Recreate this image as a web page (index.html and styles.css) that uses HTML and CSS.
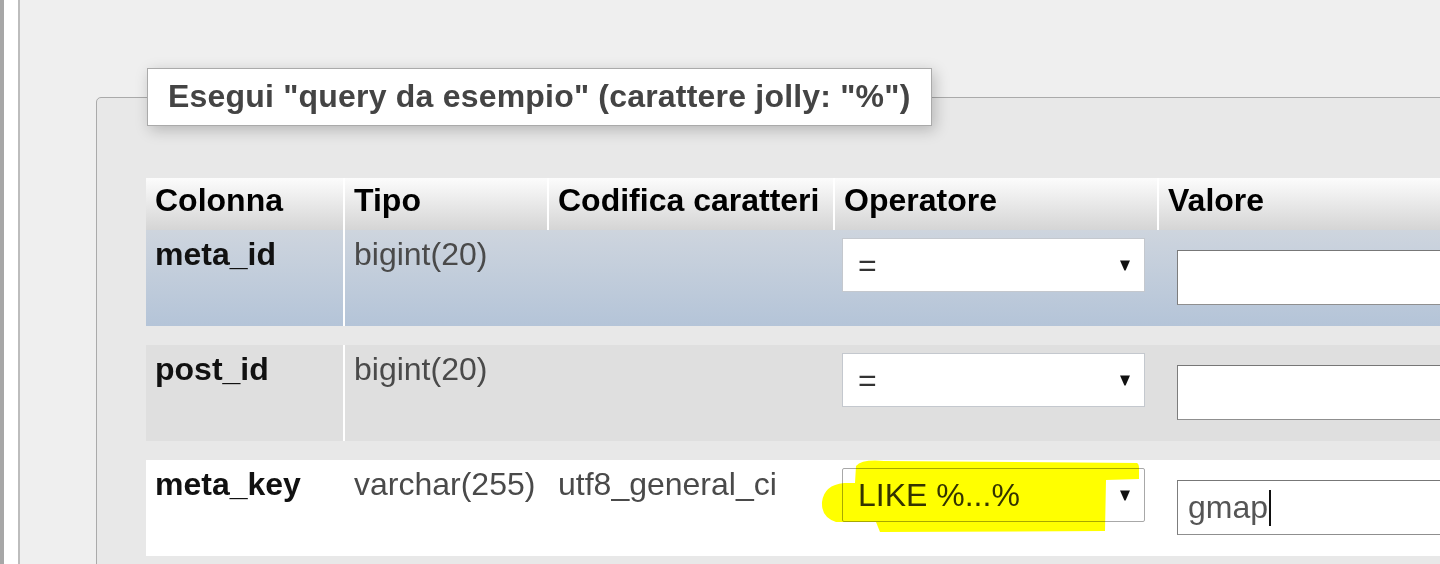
FILE: index.html
```html
<!DOCTYPE html>
<html lang="it">
<head>
    <meta charset="UTF-8">
    <meta name="viewport" content="width=device-width, initial-scale=1.0">
    <title>Cerca - post_meta</title>
    <link rel="stylesheet" href="styles.css">
</head>
<body>
    <div class="frame">
        <div class="frame-edge"></div>
        <div class="frame-gap"></div>

        <!-- Search form -->
        <main class="content">
            <fieldset class="search">
                <legend>Esegui "query da esempio" (carattere jolly: "%")</legend>
                <table class="data">
                    <colgroup>
                        <col class="col-name">
                        <col class="col-type">
                        <col class="col-collation">
                        <col class="col-operator">
                        <col class="col-value">
                    </colgroup>
                    <thead>
                        <tr>
                            <th>Colonna</th>
                            <th>Tipo</th>
                            <th>Codifica caratteri</th>
                            <th>Operatore</th>
                            <th>Valore</th>
                        </tr>
                    </thead>
                    <tbody>
                        <tr class="marked">
                            <th>meta_id</th>
                            <td>bigint(20)</td>
                            <td></td>
                            <td>
                                <div class="select">
                                    <span>=</span>
                                    <svg class="arrow" width="10" height="11" viewBox="0 0 10 11"><path d="M0 0.5 H10 L5.6 10.5 H4.4 Z"/></svg>
                                </div>
                            </td>
                            <td><div class="value-input"></div></td>
                        </tr>
                        <tr class="even">
                            <th>post_id</th>
                            <td>bigint(20)</td>
                            <td></td>
                            <td>
                                <div class="select">
                                    <span>=</span>
                                    <svg class="arrow" width="10" height="11" viewBox="0 0 10 11"><path d="M0 0.5 H10 L5.6 10.5 H4.4 Z"/></svg>
                                </div>
                            </td>
                            <td><div class="value-input"></div></td>
                        </tr>
                        <tr class="odd">
                            <th>meta_key</th>
                            <td>varchar(255)</td>
                            <td>utf8_general_ci</td>
                            <td>
                                <div class="mark">
                                    <div class="select select-active">
                                        <span>LIKE %...%</span>
                                        <svg class="arrow" width="10" height="11" viewBox="0 0 10 11"><path d="M0 0.5 H10 L5.6 10.5 H4.4 Z"/></svg>
                                    </div>
                                    <!-- highlighter stroke -->
                                    <svg class="highlight" width="326" height="80" viewBox="0 0 326 80"><path d="M38 8 Q44 1 66 3 L319 5 Q321 6 321 10 L321 21 L288 22 L287 73 L62 74 L58 64 L18 64 Q3 59 4 44 Q6 27 26 25 L37 25 Z"/></svg>
                                </div>
                            </td>
                            <td><div class="value-input">gmap<span class="caret"></span></div></td>
                        </tr>
                    </tbody>
                </table>
            </fieldset>
        </main>
    </div>
</body>
</html>
```

FILE: styles.css
```css
body {
    margin: 0;
    height: 564px;
    overflow: hidden;
    background: #efefef;
    font-family: "Liberation Sans", Arial, sans-serif;
    font-size: 32px;
}
.frame {
    display: flex;
    height: 100%;
}
.frame-edge {
    flex-shrink: 0;
    width: 4px;
    background: #a7a7a7;
}
.frame-gap {
    flex-shrink: 0;
    width: 14px;
    background: #fff;
    border-right: 2px solid #bdbdbd;
}
.content {
    flex: 1;
    min-width: 0;
    padding: 68px 0 0 76px;
}
.search {
    width: 1500px;
    margin: 0;
    padding: 52px 0 60px 49px;
    border: 1px solid #aaa;
    border-radius: 5px 0 0 0;
    background: #e8e8e8;
}
.search legend {
    margin-left: 1px;
    padding: 9px 20px 10px;
    background: #fff;
    border: 1px solid #aaa;
    box-shadow: 3px 4px 14px rgba(0, 0, 0, 0.22);
    color: #444;
    font-weight: bold;
    letter-spacing: 0.2px;
}
.data {
    width: 1400px;
    table-layout: fixed;
    border-collapse: separate;
    border-spacing: 0;
}
.col-name { width: 199px; }
.col-type { width: 204px; }
.col-collation { width: 286px; }
.col-operator { width: 324px; }
.col-value { width: 387px; }

.data thead th {
    padding: 4px 9px 11px;
    text-align: left;
    color: #000;
    background: linear-gradient(to bottom, #fcfcfc, #d5d5d5);
    border-right: 2px solid #fff;
    white-space: nowrap;
}
.data tbody th,
.data tbody td {
    height: 84px;
    padding: 6px 9px;
    vertical-align: top;
    text-align: left;
    white-space: nowrap;
    background-clip: padding-box;
}
.data tbody th {
    padding-right: 11px;
    color: #111;
    box-shadow: inset -2px 0 #fff;
}
.data tbody td {
    color: #4a4a4a;
}
.data tbody tr + tr > * {
    border-top: 19px solid #e8e8e8;
}
/* Row colours */
.marked th, .marked td {
    background: linear-gradient(to bottom, #ced5de, #b4c4d8);
}
.even th, .even td {
    background: #dfdfdf;
}
.odd th, .odd td {
    background: #fff;
}

.select {
    box-sizing: border-box;
    display: flex;
    align-items: center;
    justify-content: space-between;
    width: 303px;
    height: 54px;
    margin: 2px 0 0 -2px;
    padding: 0 14px 0 15px;
    background: #fff;
    border: 1px solid #c4c8ce;
    color: #333;
}
.select-active {
    border-color: #a8a8a8;
    border-radius: 2px;
}
.arrow {
    fill: #111;
}
.mark {
    position: relative;
}
.highlight {
    position: absolute;
    left: -26px;
    top: -10px;
    fill: #ffff00;
    mix-blend-mode: multiply;
    pointer-events: none;
}
.value-input {
    box-sizing: border-box;
    display: flex;
    align-items: center;
    width: 400px;
    height: 55px;
    margin: 14px 0 0 9px;
    padding: 0 10px;
    background: #fff;
    border: 1px solid #8f8f8f;
    border-top-color: #777;
    border-left-color: #7d7d7d;
    color: #555;
}
.caret {
    display: inline-block;
    width: 2px;
    height: 36px;
    margin-left: 1px;
    background: #111;
}
```
